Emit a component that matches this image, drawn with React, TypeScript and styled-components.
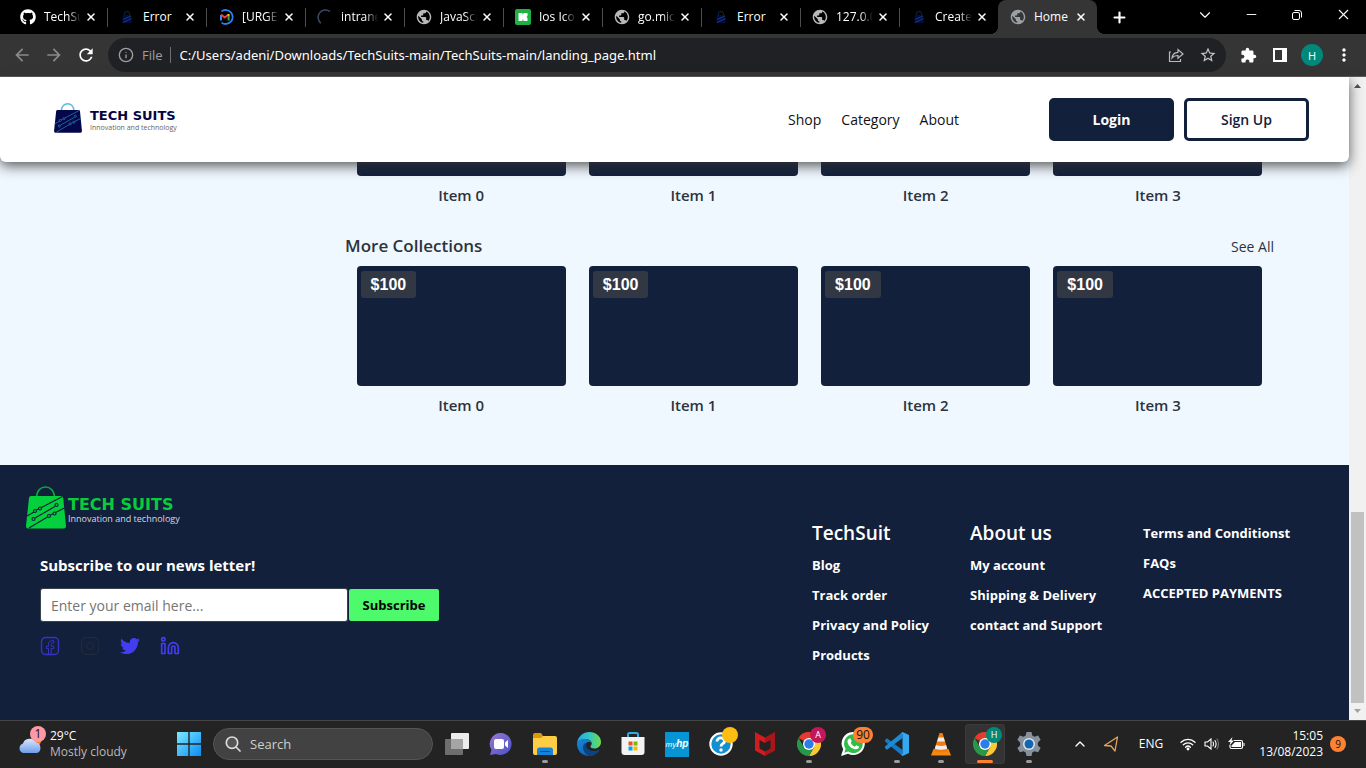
import React from "react";
import styled, { createGlobalStyle, css } from "styled-components";
import { FaGithub, FaTwitter } from "react-icons/fa";
import { MdExtension, MdRefresh, MdStarBorder, MdArrowBack, MdArrowForward, MdMoreVert, MdPublic } from "react-icons/md";
import { Info, Instagram, Linkedin, X, Plus, ChevronDown, ChevronUp, Minus } from "lucide-react";

const navy = "#13203b";
const siteFont = `"Open Sans", "Noto Sans", sans-serif`;
const systemFont = `"Open Sans", "Noto Sans", sans-serif`;

const GlobalStyle = createGlobalStyle`
  *, *::before, *::after { box-sizing: border-box; }
  body { margin: 0; background: #000; font-family: ${systemFont}; }
  button { border: 0; padding: 0; background: none; color: inherit; font: inherit; cursor: pointer; }
  input { border: 0; padding: 0; font: inherit; outline: 0; min-width: 0; }
  a { color: inherit; text-decoration: none; }
  h2, h3, p, ul { margin: 0; padding: 0; }
  ul { list-style: none; }
  svg { display: block; flex: none; }
`;

const Desktop = styled.div`
  display: flex;
  flex-direction: column;
  height: 100vh;
  overflow: hidden;
`;

/* ---------- browser tabs ---------- */

const TabStrip = styled.header`
  display: flex;
  flex: none;
  height: 34px;
  padding-left: 8px;
  background: #000;
  color: #fff;
`;

const Tab = styled.div<{ $active?: boolean; $divided?: boolean }>`
  position: relative;
  display: flex;
  align-items: center;
  flex: 0 1 99px;
  min-width: 0;
  padding: 0 10px 0 12px;
  ${(p) => p.$divided && css`
    &::before {
      content: "";
      position: absolute;
      left: 0;
      top: 8px;
      width: 1px;
      height: 19px;
      background: #4d4d4d;
    }
  `}
  ${(p) => p.$active && css`
    background: #353535;
    border-radius: 8px 8px 0 0;
    &::before, &::after {
      content: "";
      position: absolute;
      bottom: 0;
      width: 8px;
      height: 8px;
    }
    &::before { left: -8px; background: radial-gradient(circle at 0 0, transparent 8px, #353535 8px); }
    &::after { right: -8px; background: radial-gradient(circle at 100% 0, transparent 8px, #353535 8px); }
  `}
`;

const TabTitle = styled.button<{ $fade?: boolean }>`
  flex: 1;
  min-width: 0;
  margin: 0 4px 0 8px;
  overflow: hidden;
  text-align: left;
  white-space: nowrap;
  font-size: 12px;
  line-height: 16px;
  ${(p) => p.$fade && css`mask-image: linear-gradient(90deg, #000 65%, transparent 100%);`}
`;

const CaptionButtons = styled.div`
  display: flex;
  margin-left: auto;
`;

const CaptionButton = styled.button`
  display: grid;
  place-items: center;
  width: 46px;
  height: 29px;
`;

const NewTab = styled.button`
  display: grid;
  place-items: center;
  width: 28px;
  height: 34px;
  margin-left: 8px;
`;

/* ---------- browser toolbar ---------- */

const Toolbar = styled.div`
  display: flex;
  align-items: center;
  flex: none;
  height: 43px;
  padding: 0 6px;
  background: #353535;
  border-bottom: 1px solid #5b5b5b;
  color: #fff;
`;

const ToolButton = styled.button<{ $dim?: boolean }>`
  display: grid;
  place-items: center;
  width: 32px;
  height: 32px;
  color: ${(p) => (p.$dim ? "#8b8b8b" : "#fff")};
`;

const Omnibox = styled.div`
  display: flex;
  align-items: center;
  flex: 1;
  height: 34px;
  margin: 0 6px;
  padding: 0 2px 0 10px;
  border-radius: 17px;
  background: #202124;
  color: #9aa0a6;
  font-size: 13px;
`;

const Scheme = styled.span`
  margin-left: 8px;
  padding-right: 7px;
  border-right: 1px solid #6c6e71;
  line-height: 16px;
`;

const Address = styled.input`
  flex: 1;
  margin-left: 9px;
  background: none;
  color: #fff;
  font-family: "Noto Sans", sans-serif;
`;

const Avatar = styled.span`
  display: grid;
  place-items: center;
  width: 22px;
  height: 22px;
  border-radius: 50%;
  background: #00897b;
  color: #fff;
  font-size: 11px;
`;

/* ---------- page viewport ---------- */

const Viewport = styled.div`
  display: flex;
  flex: 1;
  min-height: 0;
  background: #f1f1f1;
`;

const Page = styled.div`
  display: flex;
  flex-direction: column;
  flex: 1;
  min-width: 0;
  background: #f0f8ff;
  font-family: ${siteFont};
`;

const ScrollTrack = styled.div`
  display: flex;
  flex-direction: column;
  align-items: center;
  justify-content: space-between;
  width: 17px;
  padding: 7px 0;
`;

const ScrollThumb = styled.div`
  width: 13px;
  height: 191px;
  margin: auto 0 6px;
  background: #c1c1c1;
`;

const SiteHeader = styled.header`
  position: relative;
  z-index: 1;
  display: flex;
  align-items: center;
  flex: none;
  height: 85px;
  padding: 0 40px 0 54px;
  border-radius: 0 0 6px 6px;
  background: #fff;
  box-shadow: 0 4px 13px rgba(50, 50, 50, 0.8);
`;

const BrandLink = styled.a<{ $large?: boolean }>`
  display: flex;
  align-items: center;
  padding-bottom: ${(p) => (p.$large ? 0 : 4)}px;
`;

const BrandText = styled.span<{ $large?: boolean }>`
  display: flex;
  flex-direction: column;
  margin-left: ${(p) => (p.$large ? 2 : 8)}px;
  padding-top: 4px;
  color: ${(p) => (p.$large ? "#05cd3b" : "#05053f")};
  font: bold ${(p) => (p.$large ? "16px/19px" : "13px/16px")} "DejaVu Sans", sans-serif;
  white-space: nowrap;
`;

const Tagline = styled.small<{ $large?: boolean }>`
  color: ${(p) => (p.$large ? "#d5d9e2" : "#666")};
  font: ${(p) => (p.$large ? "9px/10px" : "7px/8px")} "Open Sans", sans-serif;
`;

const SiteNav = styled.nav`
  display: flex;
  gap: 20px;
  margin: 0 90px 0 auto;
  color: #111;
  font-size: 14px;
  line-height: 20px;
`;

const HeaderActions = styled.div`
  display: flex;
  gap: 10px;
`;

const ActionButton = styled.button<{ $filled?: boolean }>`
  width: 125px;
  height: 43px;
  border: 3px solid ${navy};
  border-radius: 5px;
  background: ${(p) => (p.$filled ? navy : "#fff")};
  color: ${(p) => (p.$filled ? "#fff" : navy)};
  font-size: 14px;
  font-weight: ${(p) => (p.$filled ? 700 : 600)};
`;

const Collections = styled.main`
  display: flex;
  flex-direction: column;
  justify-content: flex-end;
  flex: 1;
  min-height: 0;
  overflow: hidden;
  padding: 0 75px 29px 345px;
  color: #2c3340;
`;

const Collection = styled.section`
  flex: none;
  padding-bottom: 21px;
`;

const CollectionHead = styled.div`
  display: flex;
  align-items: center;
  justify-content: space-between;
  height: 40px;
  font-size: 14px;
`;

const CollectionTitle = styled.h2`
  font-size: 17px;
  line-height: 20px;
  font-weight: 600;
`;

const CardGrid = styled.ul`
  display: grid;
  grid-template-columns: repeat(4, 1fr);
`;

const CardItem = styled.li`
  display: flex;
  flex-direction: column;
  align-items: center;
`;

const Picture = styled.div`
  position: relative;
  width: 90%;
  height: 120px;
  border-radius: 4px;
  background: ${navy};
`;

const Price = styled.span`
  position: absolute;
  top: 5px;
  left: 4px;
  padding: 0 10px;
  border-radius: 3px;
  background: #323843;
  color: #fff;
  font: bold 16px/27px "Liberation Sans", sans-serif;
`;

const ItemName = styled.p`
  padding-top: 9px;
  font-size: 15px;
  line-height: 20px;
  font-weight: 600;
`;

/* ---------- site footer ---------- */

const SiteFooter = styled.footer`
  display: flex;
  justify-content: space-between;
  flex: none;
  height: 255px;
  padding: 21px 60px 0 26px;
  background: ${navy};
  color: #fff;
`;

const Newsletter = styled.form`
  display: flex;
  flex-direction: column;
  padding: 26px 0 0 14px;
`;

const NewsletterLabel = styled.label`
  font-size: 15px;
  line-height: 20px;
  font-weight: 700;
`;

const FieldRow = styled.div`
  display: flex;
  gap: 1px;
  margin-top: 13px;
`;

const EmailInput = styled.input`
  width: 308px;
  height: 34px;
  padding: 0 10px;
  border: 1px solid #39404e;
  border-radius: 3px;
  background: #fff;
  color: #222;
  font-size: 14px;
  &::placeholder { color: #757575; }
`;

const SubscribeButton = styled.button`
  width: 90px;
  height: 32px;
  align-self: center;
  border-radius: 2px;
  background: #4dfa6b;
  color: #000;
  font-size: 13px;
  font-weight: 700;
`;

const SocialLinks = styled.div`
  display: flex;
  gap: 20px;
  margin-top: 14px;
`;

const FooterNav = styled.nav`
  display: grid;
  grid-template-columns: 118px 133px 146px;
  align-content: start;
  column-gap: 40px;
  padding-top: 37px;
`;

const FooterList = styled.ul`
  display: flex;
  flex-direction: column;
  gap: 10px;
  font-size: 13px;
  line-height: 20px;
  font-weight: 700;
  white-space: nowrap;
`;

const FooterTitle = styled.h3`
  margin-bottom: 2px;
  font-size: 19px;
  line-height: 20px;
  font-weight: 600;
`;

/* ---------- taskbar ---------- */

const TaskbarRoot = styled.footer`
  display: flex;
  align-items: center;
  flex: none;
  height: 48px;
  padding: 0 20px 1px 18px;
  border-top: 1px solid #454545;
  background: #232323;
  color: #fff;
  font-size: 12px;
  line-height: 16px;
`;

const Weather = styled.button`
  display: flex;
  gap: 6px;
  width: 151px;
  text-align: left;
`;

const WeatherText = styled.span`
  display: flex;
  flex-direction: column;
  white-space: nowrap;
  & > span + span { color: #b9b9b9; }
`;

const IconHolder = styled.span`
  position: relative;
  display: block;
`;

const Badge = styled.span<{ $bg: string; $fg?: string; $wide?: boolean; $side?: number; $rise?: number }>`
  position: absolute;
  top: ${(p) => p.$rise ?? -5}px;
  right: ${(p) => p.$side ?? -5}px;
  width: ${(p) => (p.$wide ? 20 : 16)}px;
  height: 16px;
  border-radius: 8px;
  background: ${(p) => p.$bg};
  color: ${(p) => p.$fg ?? "#fff"};
  font-size: ${(p) => (p.$fg ? 12 : 9)}px;
  line-height: 16px;
  text-align: center;
`;

const StartButton = styled.button`
  display: grid;
  place-items: center;
  width: 40px;
  height: 40px;
`;

const SearchBox = styled.label`
  display: flex;
  align-items: center;
  gap: 9px;
  width: 220px;
  height: 32px;
  margin: 0 4px;
  padding: 0 11px;
  border: 1px solid #545454;
  border-radius: 16px;
  background: #424242;
`;

const SearchInput = styled.input`
  flex: 1;
  background: none;
  font-size: 13px;
  &::placeholder { color: #cfcfcf; opacity: 1; }
`;

const AppRow = styled.div`
  display: flex;
  gap: 4px;
`;

const AppButton = styled.button<{ $state?: "running" | "active" }>`
  position: relative;
  display: grid;
  place-items: center;
  width: 40px;
  height: 40px;
  border-radius: 4px;
  ${(p) => p.$state === "active" && css`
    background: #333;
    box-shadow: inset 0 0 0 1px #3b3b3b;
  `}
  ${(p) => p.$state && css`
    &::after {
      content: "";
      position: absolute;
      bottom: 1px;
      left: 50%;
      width: ${p.$state === "active" ? 16 : 6}px;
      height: 3px;
      margin-left: ${p.$state === "active" ? -8 : -3}px;
      border-radius: 2px;
      background: ${p.$state === "active" ? "#ff8133" : "#9b9b9b"};
    }
  `}
`;

const Tray = styled.div`
  display: flex;
  align-items: center;
  margin-left: auto;
`;

const TrayButton = styled.button<{ $width: number }>`
  display: grid;
  place-items: center;
  width: ${(p) => p.$width}px;
  height: 40px;
`;

const Clock = styled.time`
  width: 75px;
  text-align: right;
`;

const Notifications = styled.span`
  width: 16px;
  margin-left: 7px;
  border-radius: 8px;
  background: #ff8133;
  color: #111;
  font-size: 10px;
  text-align: center;
`;

/* ---------- drawings ---------- */

const Globe = ({ color = "#b9b9b9" }: { color?: string }) => (
  <MdPublic size={16} viewBox="1 1 22 22" color={color} />
);

const BagFavicon = () => (
  <svg width="16" height="16" viewBox="0 0 16 16">
    <path d="M5.500 6V4.500a2.500 2 0 0 1 5 0V6" fill="none" stroke="#0d2a48" strokeWidth="1" />
    <path d="M4 6h8l.7 8H3.300z" fill="#040a45" />
    <path d="M4 10.500l8-3.500M4 13.500l8.500-4" stroke="#103c6b" strokeWidth="1.200" />
  </svg>
);

const MailFavicon = () => (
  <svg width="16" height="16" viewBox="0 0 16 16" fill="none">
    <path d="M3.500 2.400A7 7 0 1 1 3.500 13.600" stroke="#2f7df6" strokeWidth="1.800" />
    <path d="M3 11.500V6" stroke="#4285f4" strokeWidth="2" />
    <path d="M3 5.500L6.800 8.500l3.700-3" stroke="#ea4335" strokeWidth="2" />
    <path d="M10.600 11.500V7" stroke="#34a853" strokeWidth="2" />
    <path d="M10.600 7V5" stroke="#fbbc04" strokeWidth="2" />
  </svg>
);

const LoadingFavicon = () => (
  <svg width="16" height="16" viewBox="0 0 16 16" fill="none">
    <path d="M13 2.500A7 7 0 1 0 4 14.200" stroke="#3c4a68" strokeWidth="1.500" />
  </svg>
);

const Icons8Favicon = () => (
  <svg width="16" height="16" viewBox="0 0 16 16">
    <rect width="16" height="16" rx="2" fill="#1fb141" />
    <path d="M3.500 4h4v2.500C7.900 5 8.500 4 9.500 4h3v3l-1 1 1 1v3h-3c-1 0-1.600-1-2-2.500V12h-4z" fill="#fff" />
  </svg>
);

const BagMark = ({ large }: { large?: boolean }) => {
  const fill = large ? "#04cf3c" : "#06064b";
  const line = large ? navy : "#2274a8";
  return (
    <svg width={large ? 40 : 28} height={large ? 43 : 30} viewBox="0 0 40 43" fill="none">
      <path d="M10.500 11.500C10.500-2.500 28.500-2.500 28.500 11.500" stroke={large ? "#0aa63a" : "#55bddd"} strokeWidth={large ? 1.5 : 2} />
      <path d="M5 10h30q2 0 2.200 2L40 40q0 2.500-2 2.500H2Q0 42.500 0 40L3 12q.2-2 2-2z" fill={fill} />
      <g stroke={line} strokeWidth="1.200">
        <path d="M1 30l7-4M10.500 24l2-1M15.500 21.500l21-11M9 32l20-11.500M3 42l18.500-11M24.500 29l2.500-1M29.500 26.500l9-4.500" />
        <circle cx="9" cy="25" r="1.500" /><circle cx="14" cy="22.500" r="1.500" /><circle cx="30.500" cy="19" r="1.500" />
        <circle cx="7.500" cy="33" r="1.500" /><circle cx="23" cy="30" r="1.500" /><circle cx="28.500" cy="27.500" r="1.500" />
      </g>
    </svg>
  );
};

const FacebookMark = () => (
  <svg width="20" height="20" viewBox="0 0 20 20" fill="none" stroke="#3731c4">
    <rect x="1.500" y="1.500" width="17" height="17" rx="4" strokeWidth="1.400" />
    <path d="M8.500 18v-5.500h-2v-2.300h2V8.300c0-2.400 1.400-3.600 3.500-3.600h1.800V7H12.500c-1 0-1.300.5-1.300 1.300v1.900h2.500v2.300h-2.500V18" />
  </svg>
);

const ShareMark = () => (
  <svg width="16" height="16" viewBox="0 0 16 16" fill="none" stroke="#b9bcbf" strokeWidth="1.200">
    <path d="M3 5H1.500v9.500h11V12" />
    <path d="M4 11c.3-3.600 2.500-5.500 6-5.700V2.500L15 7l-5 4.300V8.500C7.300 8.500 5.500 9 4 11z" />
  </svg>
);

const SidePanelMark = () => (
  <svg width="14" height="14" viewBox="0 0 14 14"><path d="M0 0h14v14H0zM2 2v10h7V2z" fill="#fff" fillRule="evenodd" /></svg>
);

const RestoreMark = () => (
  <svg width="12" height="12" viewBox="0 0 12 12" fill="none" stroke="#fff">
    <rect x="1.500" y="3.500" width="7" height="7" rx="1.500" />
    <path d="M3.500 1.500H8a2.500 2.500 0 0 1 2.500 2.500v4.500" />
  </svg>
);

const CloudMark = () => (
  <svg width="26" height="26" viewBox="0 0 26 26">
    <defs><linearGradient id="cloud" x2="0" y2="1"><stop stopColor="#d8e6ff" /><stop offset="1" stopColor="#6f9de9" /></linearGradient></defs>
    <circle cx="18" cy="13" r="5" fill="#f5841f" />
    <path d="M5 25a5 5 0 0 1 0-9.500 7 6.500 0 0 1 13-1A5.500 5.500 0 0 1 19 25z" fill="url(#cloud)" />
  </svg>
);

const WindowsMark = () => (
  <svg width="24" height="24" viewBox="0 0 24 24">
    <defs><linearGradient id="win" x2="1" y2="1"><stop stopColor="#7ce9ff" /><stop offset="1" stopColor="#0b8cf5" /></linearGradient></defs>
    <path d="M0 0h11.300v11.300H0zM12.700 0H24v11.300H12.700zM0 12.700h11.300V24H0zM12.700 12.700H24V24H12.700z" fill="url(#win)" />
  </svg>
);

const SearchMark = () => (
  <svg width="16" height="16" viewBox="0 0 16 16" fill="none" stroke="#dcdcdc" strokeWidth="1.700">
    <circle cx="7" cy="6.700" r="5.700" fill="#555" /><path d="M11 11l4 4" strokeLinecap="round" />
  </svg>
);

const TaskViewMark = () => (
  <svg width="24" height="24" viewBox="0 0 24 24">
    <rect x="6" y="1" width="18" height="16" rx="1" fill="#ececec" />
    <rect y="7" width="18" height="16" rx="1" fill="#777" fillOpacity=".9" />
    <rect x="6" y="7" width="12" height="10" fill="#a5a5a5" />
  </svg>
);

const MeetMark = () => (
  <svg width="24" height="24" viewBox="0 0 24 24">
    <defs><linearGradient id="meet" x2="1" y2="1"><stop stopColor="#9a78d2" /><stop offset="1" stopColor="#4752c9" /></linearGradient></defs>
    <path d="M12 1a11 11 0 1 1-5 21L1 23l1.500-5A11 11 0 0 1 12 1z" fill="url(#meet)" />
    <rect x="5" y="7" width="10" height="10" rx="2" fill="#fff" /><path d="M16 10.500l3-2.500v8l-3-2.500z" fill="#fff" />
  </svg>
);

const FolderMark = () => (
  <svg width="24" height="24" viewBox="0 0 24 24">
    <path d="M0 3q0-2 2-2h6l2 3v5H0z" fill="#d99a0a" />
    <path d="M0 6h8l2-2h12q2 0 2 2v15q0 2-2 2H2q-2 0-2-2z" fill="#fdce45" />
    <path d="M4 23v-5q0-2.500 2.500-2.500h11Q20 15.500 20 18v5z" fill="#1583d8" />
    <path d="M8 19h8q1 0 1 1H7q0-1 1-1z" fill="#0b4f92" />
  </svg>
);

const EdgeMark = () => (
  <svg width="24" height="24" viewBox="0 0 24 24">
    <defs>
      <linearGradient id="edgeTop"><stop stopColor="#2aa5e5" /><stop offset=".5" stopColor="#31c6c4" /><stop offset="1" stopColor="#6edc4a" /></linearGradient>
      <linearGradient id="edgeLow" x2="1" y2="1"><stop stopColor="#1788dc" /><stop offset="1" stopColor="#0c57a4" /></linearGradient>
    </defs>
    <path d="M0 11C1 4.500 6 0 12.500 0 19 0 24 4.500 24 10c0 4-3 6.500-6.500 6.500-2.500 0-4-1-4-2 0-.8 1.200-1.200 1.200-3C14.700 8.500 11.500 7 8 7c-3 0-6.500 1-8 4z" fill="url(#edgeTop)" />
    <path d="M0 12c0-3 3.500-5 7.500-5 3.500 0 7 1.500 7 4.500-1-1.700-4-2-5.500 0C6.500 15 10 20 15 20c3 0 5.500-1 7.500-2.500C20.500 21.500 16.500 24 12 24 5.500 24 0 19 0 12z" fill="url(#edgeLow)" />
    <path d="M7.500 11.500C4 15 7 22 12 24c4.500 0 8.500-2.500 10.500-6.500C17 20.500 11 19 9.500 15c-.5-1.500-.2-3 .5-4z" fill="#0a4484" />
  </svg>
);

const StoreMark = () => (
  <svg width="24" height="24" viewBox="0 0 24 24">
    <path d="M7 7V2.500Q7 1 8.500 1h7Q17 1 17 2.500V7" fill="none" stroke="#35a8e0" strokeWidth="2" />
    <path d="M.5 5h23v15q0 3-3 3h-17q-3 0-3-3z" fill="#f3f3f3" />
    <path d="M7.500 9.500h4v4h-4z" fill="#f25022" /><path d="M12.500 9.500h4v4h-4z" fill="#7fba00" />
    <path d="M7.500 14.500h4v4h-4z" fill="#00a4ef" /><path d="M12.500 14.500h4v4h-4z" fill="#ffb900" />
  </svg>
);

const MyHp = styled.span`
  display: block;
  width: 24px;
  background: #0794d5;
  color: #fff;
  font: italic 8px/24px "Liberation Sans", sans-serif;
  text-align: center;
  b { font-size: 10px; }
`;

const HelpMark = () => (
  <svg width="24" height="24" viewBox="0 0 24 24" fill="none">
    <circle cx="12" cy="12" r="10.700" fill="#158fd0" stroke="#fff" strokeWidth="2" />
    <path d="M8 9.500C8 4.500 16 5 15.500 9.500 15.200 12 12 11.500 12 14.500" stroke="#fff" strokeWidth="2.800" />
    <circle cx="12" cy="18" r="1.700" fill="#fff" />
  </svg>
);

const McAfeeMark = () => (
  <svg width="20" height="24" viewBox="0 0 20 24">
    <path d="M0 0l10 5.500V11L4.500 8v8.500l5.500 3V24L0 18.500z" fill="#cf1c20" />
    <path d="M20 0L10 5.500V11l5.500-3v8.500l-5.500 3V24l10-5.500z" fill="#a91519" />
  </svg>
);

const ChromeMark = () => (
  <svg width="24" height="24" viewBox="0 0 24 24">
    <path d="M12 12L1.600 6A12 12 0 0 1 22.400 6z" fill="#e33b2e" />
    <path d="M12 12V6h10.400A12 12 0 0 1 12 24l5.200-9z" fill="#fcc934" />
    <path d="M12 12l5.200 3L12 24A12 12 0 0 1 1.600 6l5.200 9z" fill="#279847" />
    <path d="M1.600 6A12 12 0 0 1 12 0v6z" fill="#e33b2e" />
    <circle cx="12" cy="12" r="6" fill="#fff" /><circle cx="12" cy="12" r="4.700" fill="#2b7de9" />
  </svg>
);

const WhatsAppMark = () => (
  <svg width="24" height="24" viewBox="0 0 24 24">
    <path d="M12.500 0a11.500 11.500 0 1 1-5.500 21.700L0 24l2.200-6.700A11.500 11.500 0 0 1 12.500 0z" fill="#fff" />
    <path d="M12.500 2.200a9.400 9.400 0 1 1-5.200 17.300L3.300 20.700l1.300-4A9.400 9.400 0 0 1 12.500 2.200z" fill="#32bd4b" />
    <path d="M9.500 6.500l1.200 2.800-1 1.400c1 2 2.300 3.100 4.200 4l1.400-1.500 2.700 1.300c.2 2-2 3.200-4 2.700-4-1-7-4-7.500-7.300-.2-1.500.8-3.800 3-3.400z" fill="#fff" />
  </svg>
);

const CodeMark = () => (
  <svg width="24" height="24" viewBox="0 0 24 24">
    <path d="M0 8l2-1.700L17.500 18v6L0 9.500z" fill="#1579c4" />
    <path d="M0 16l2 1.700L17.500 6V0L0 14.500z" fill="#1b8bd5" />
    <path d="M17.500 0L24 3v18l-6.500 3-1.500-1.500q1.500.5 1.500-1.500V3q0-2-1.500-1.500z" fill="#35a8f2" />
  </svg>
);

const ConeMark = () => (
  <svg width="20" height="24" viewBox="0 0 20 24">
    <path d="M2.500 17h15l2.500 6.500H0z" fill="#f58a12" />
    <path d="M8.500 1h3L17 19q-7 3-14 0z" fill="#f47b0b" />
    <path d="M7.300 5.500h5.400l1.200 4H6.100z" fill="#eee" /><path d="M5 13q5 2 10 0l1.200 3.700q-6.200 2.300-12.400 0z" fill="#eee" />
  </svg>
);

const GearMark = () => (
  <svg width="24" height="24" viewBox="0 0 24 24">
    <path d="M9.500 0h5l.8 3.600 2.200 1.200 3.600-1.200 2.500 4.200-2.700 2.600v3l2.700 2.700-2.500 4.200-3.600-1.100-2.200 1.200-.8 3.600h-5l-.8-3.600-2.200-1.200-3.600 1.100L.4 16.100l2.700-2.700v-3L.4 7.800l2.500-4.200 3.600 1.200 2.200-1.200z" fill="#87919b" />
    <circle cx="12" cy="12" r="6" fill="#dfe6ec" /><circle cx="12" cy="12" r="4.500" fill="#1267b1" />
  </svg>
);

const LocationMark = () => (
  <svg width="16" height="16" viewBox="0 0 16 16" fill="none" stroke="#e6a35c" strokeWidth="1.300" strokeLinejoin="round">
    <path d="M14.500 1L1.500 9.500l6.500.5 4 5z" />
  </svg>
);

const WifiMark = () => (
  <svg width="16" height="14" viewBox="0 0 16 14" fill="none" stroke="#fff" strokeWidth="1.300" strokeLinecap="round">
    <path d="M1 5.300a10 10 0 0 1 14 0M3.300 7.800a6.700 6.700 0 0 1 9.400 0M5.600 10.200a3.400 3.400 0 0 1 4.800 0" />
    <circle cx="8" cy="12" r=".8" fill="#fff" />
  </svg>
);

const SpeakerMark = () => (
  <svg width="16" height="14" viewBox="0 0 16 14" fill="none" stroke="#fff" strokeWidth="1.100" strokeLinecap="round">
    <path d="M1 5v4h2.500L7 12V2L3.500 5zM9 5q1.300 2 0 4M11 3.500q2.200 3.500 0 7" />
    <path d="M13 2q3 5 0 10" stroke="#777" />
  </svg>
);

const BatteryMark = () => (
  <svg width="17" height="14" viewBox="0 0 17 14">
    <path d="M6 3.500h7q1.500 0 1.500 1.500v5q0 1.500-1.500 1.500H3.500Q2 11.500 2 10V8" fill="none" stroke="#fff" strokeWidth="1.200" />
    <path d="M7 5h6v5H3.500V8.500zM15.500 6h1v3h-1zM4.500 0L0 5h2.500L1.500 8.500 6 3.500H3.500z" fill="#fff" />
  </svg>
);

const ScrollArrow = ({ down }: { down?: boolean }) => (
  <svg width="7" height="4" viewBox="0 0 7 4"><path d={down ? "M0 0h7L3.500 4z" : "M0 4h7L3.500 0z"} fill={down ? "#a3a3a3" : "#505050"} /></svg>
);

/* ---------- content ---------- */

const tabs: { title: string; icon: React.ReactNode; fade?: boolean }[] = [
  { title: "TechSuits", icon: <FaGithub size={16} />, fade: true },
  { title: "Error", icon: <BagFavicon /> },
  { title: "[URGENT]", icon: <MailFavicon />, fade: true },
  { title: "intranet", icon: <LoadingFavicon />, fade: true },
  { title: "JavaScript", icon: <Globe />, fade: true },
  { title: "Ios Icons", icon: <Icons8Favicon />, fade: true },
  { title: "go.micro", icon: <Globe />, fade: true },
  { title: "Error", icon: <BagFavicon /> },
  { title: "127.0.0.1", icon: <Globe />, fade: true },
  { title: "Create", icon: <BagFavicon />, fade: true },
  { title: "Home", icon: <Globe color="#9aa0a6" /> },
];

const items = ["Item 0", "Item 1", "Item 2", "Item 3"];

const footerColumns = [
  { title: "TechSuit", links: ["Blog", "Track order", "Privacy and Policy", "Products"] },
  { title: "About us", links: ["My account", "Shipping & Delivery", "contact and Support"] },
  { title: "", links: ["Terms and Conditionst", "FAQs", "ACCEPTED PAYMENTS"] },
];

const taskbarApps: { name: string; icon: React.ReactNode; state?: "running" | "active" }[] = [
  { name: "Task view", icon: <TaskViewMark /> },
  { name: "Chat", icon: <MeetMark /> },
  { name: "File Explorer", icon: <FolderMark />, state: "running" },
  { name: "Edge", icon: <EdgeMark /> },
  { name: "Store", icon: <StoreMark /> },
  { name: "myHP", icon: <MyHp>my<b>hp</b></MyHp> },
  { name: "Help", icon: <><HelpMark /><Badge $bg="#fdbc12" /></> },
  { name: "McAfee", icon: <McAfeeMark /> },
  { name: "Chrome, profile A", icon: <><ChromeMark /><Badge $bg="#c2185b">A</Badge></>, state: "running" },
  { name: "WhatsApp", icon: <><WhatsAppMark /><Badge $bg="#ff8133" $fg="#111" $wide $side={-8}>90</Badge></> },
  { name: "Code", icon: <CodeMark />, state: "running" },
  { name: "VLC", icon: <ConeMark />, state: "running" },
  { name: "Chrome, profile H", icon: <><ChromeMark /><Badge $bg="#00897b">H</Badge></>, state: "active" },
  { name: "Settings", icon: <GearMark />, state: "running" },
];

const Brand = ({ large }: { large?: boolean }) => (
  <BrandLink href="#home" $large={large}>
    <BagMark large={large} />
    <BrandText $large={large}>
      TECH SUITS
      <Tagline $large={large}>Innovation and technology</Tagline>
    </BrandText>
  </BrandLink>
);

const CollectionSection = ({ title }: { title: string }) => (
  <Collection>
    <CollectionHead>
      <CollectionTitle>{title}</CollectionTitle>
      <a href="#all">See All</a>
    </CollectionHead>
    <CardGrid>
      {items.map((name) => (
        <CardItem key={name}>
          <Picture><Price>$100</Price></Picture>
          <ItemName>{name}</ItemName>
        </CardItem>
      ))}
    </CardGrid>
  </Collection>
);

const BrowserChrome = () => (
  <>
    <TabStrip>
      {tabs.map((tab, i) => {
        const active = i === tabs.length - 1;
        return (
          <Tab key={i} $active={active} $divided={i > 0 && !active}>
            {tab.icon}
            <TabTitle $fade={tab.fade}>{tab.title}</TabTitle>
            <button aria-label="Close tab"><X size={12} strokeWidth={3} /></button>
          </Tab>
        );
      })}
      <NewTab aria-label="New tab"><Plus size={17} strokeWidth={3} /></NewTab>
      <CaptionButtons>
        <CaptionButton aria-label="Search tabs"><ChevronDown size={18} strokeWidth={1.5} /></CaptionButton>
        <CaptionButton aria-label="Minimise"><Minus size={15} strokeWidth={1.5} /></CaptionButton>
        <CaptionButton aria-label="Restore"><RestoreMark /></CaptionButton>
        <CaptionButton aria-label="Close window"><X size={17} strokeWidth={1.5} /></CaptionButton>
      </CaptionButtons>
    </TabStrip>
    <Toolbar>
      <ToolButton $dim aria-label="Back"><MdArrowBack size={20} /></ToolButton>
      <ToolButton $dim aria-label="Forward"><MdArrowForward size={20} /></ToolButton>
      <ToolButton aria-label="Reload"><MdRefresh size={20} /></ToolButton>
      <Omnibox>
        <Info size={16} />
        <Scheme>File</Scheme>
        <Address aria-label="Address" defaultValue="C:/Users/adeni/Downloads/TechSuits-main/TechSuits-main/landing_page.html" />
        <ToolButton aria-label="Share"><ShareMark /></ToolButton>
        <ToolButton aria-label="Bookmark"><MdStarBorder size={18} color="#c4c7c9" /></ToolButton>
      </Omnibox>
      <ToolButton aria-label="Extensions"><MdExtension size={17} /></ToolButton>
      <ToolButton aria-label="Side panel"><SidePanelMark /></ToolButton>
      <ToolButton aria-label="Profile"><Avatar>H</Avatar></ToolButton>
      <ToolButton aria-label="Menu"><MdMoreVert size={20} /></ToolButton>
    </Toolbar>
  </>
);

const Footer = () => (
  <SiteFooter>
    <div>
      <Brand large />
      <Newsletter>
        <NewsletterLabel htmlFor="email">Subscribe to our news letter!</NewsletterLabel>
        <FieldRow>
          <EmailInput id="email" type="email" placeholder="Enter your email here..." />
          <SubscribeButton type="button">Subscribe</SubscribeButton>
        </FieldRow>
        <SocialLinks>
          <a href="#facebook" aria-label="Facebook"><FacebookMark /></a>
          <a href="#instagram" aria-label="Instagram"><Instagram size={20} strokeWidth={1.5} color="#222a3a" /></a>
          <a href="#twitter" aria-label="Twitter"><FaTwitter size={20} color="#423df0" /></a>
          <a href="#linkedin" aria-label="LinkedIn"><Linkedin size={20} color="#423df0" /></a>
        </SocialLinks>
      </Newsletter>
    </div>
    <FooterNav>
      {footerColumns.map((column, i) => (
        <FooterList key={i}>
          {column.title && <li><FooterTitle>{column.title}</FooterTitle></li>}
          {column.links.map((link) => <li key={link}><a href="#info">{link}</a></li>)}
        </FooterList>
      ))}
    </FooterNav>
  </SiteFooter>
);

const Taskbar = () => (
  <TaskbarRoot>
    <Weather>
      <IconHolder><CloudMark /><Badge $bg="#ff99a4" $fg="#111" $side={-2} $rise={-2}>1</Badge></IconHolder>
      <WeatherText><span>29°C</span><span>Mostly cloudy</span></WeatherText>
    </Weather>
    <StartButton aria-label="Start"><WindowsMark /></StartButton>
    <SearchBox>
      <SearchMark />
      <SearchInput aria-label="Search" placeholder="Search" />
    </SearchBox>
    <AppRow>
      {taskbarApps.map((app) => (
        <AppButton key={app.name} $state={app.state} aria-label={app.name}>
          <IconHolder>{app.icon}</IconHolder>
        </AppButton>
      ))}
    </AppRow>
    <Tray>
      <TrayButton $width={32} aria-label="Hidden icons"><ChevronUp size={16} /></TrayButton>
      <TrayButton $width={30} aria-label="Location"><LocationMark /></TrayButton>
      <TrayButton $width={50} aria-label="Language">ENG</TrayButton>
      <TrayButton $width={24} aria-label="Network"><WifiMark /></TrayButton>
      <TrayButton $width={24} aria-label="Volume"><SpeakerMark /></TrayButton>
      <TrayButton $width={24} aria-label="Battery"><BatteryMark /></TrayButton>
      <Clock>15:05<br />13/08/2023</Clock>
      <Notifications>9</Notifications>
    </Tray>
  </TaskbarRoot>
);

export default function App() {
  return (
    <Desktop>
      <GlobalStyle />
      <BrowserChrome />
      <Viewport>
        <Page>
          <SiteHeader>
            <Brand />
            <SiteNav>
              <a href="#shop">Shop</a>
              <a href="#category">Category</a>
              <a href="#about">About</a>
            </SiteNav>
            <HeaderActions>
              <ActionButton $filled>Login</ActionButton>
              <ActionButton>Sign Up</ActionButton>
            </HeaderActions>
          </SiteHeader>
          <Collections>
            <CollectionSection title="Collections" />
            <CollectionSection title="More Collections" />
          </Collections>
          <Footer />
        </Page>
        <ScrollTrack>
          <ScrollArrow />
          <ScrollThumb />
          <ScrollArrow down />
        </ScrollTrack>
      </Viewport>
      <Taskbar />
    </Desktop>
  );
}
